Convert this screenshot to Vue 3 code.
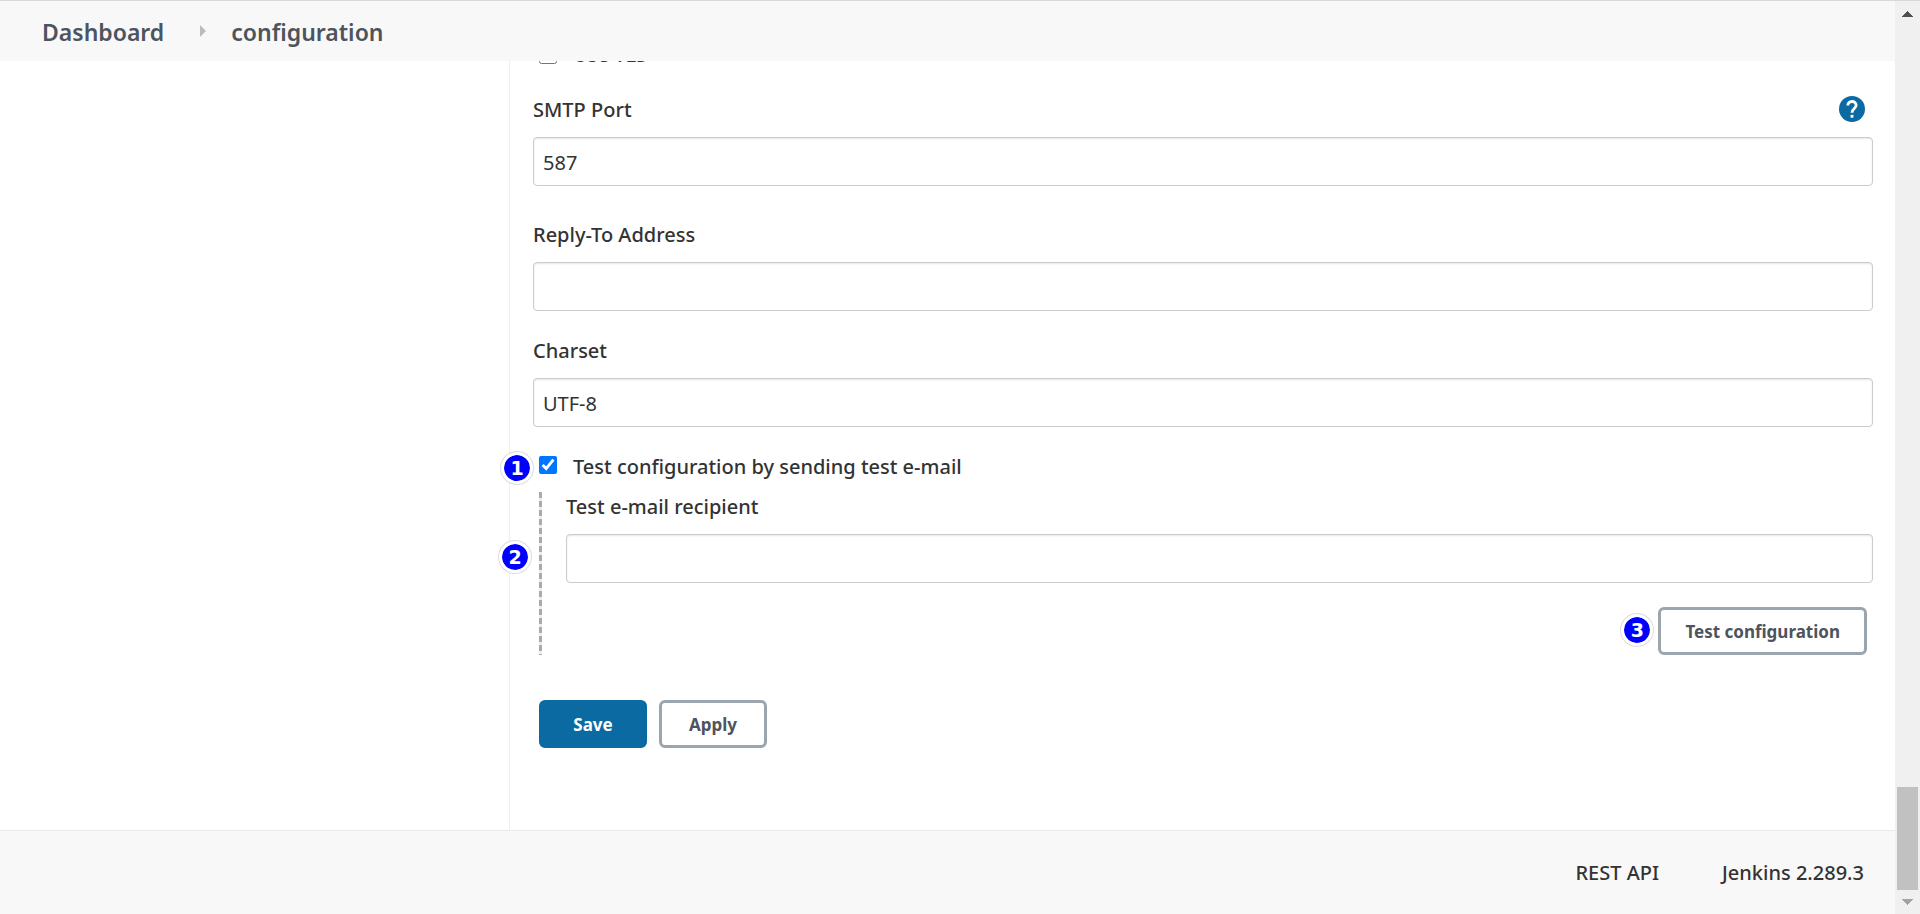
<script setup>
import { ref } from 'vue'

const useTls = ref(false)
const smtpPort = ref('587')
const replyTo = ref('')
const charset = ref('UTF-8')
const sendTest = ref(true)
const recipient = ref('')
</script>

<template>
  <div class="window">
    <div class="page">
      <header class="breadcrumbs">
        <a href="#dashboard">Dashboard</a>
        <svg class="crumb-arrow" viewBox="0 0 6 12" width="6" height="12" aria-hidden="true">
          <path d="M0 0L6 6L0 12Z" fill="#bbb" />
        </svg>
        <a href="#configuration">configuration</a>
      </header>

      <div class="body">
        <aside class="side"></aside>
        <main class="main">
          <form class="form" @submit.prevent>
            <div class="check-row tls">
              <input id="tls" v-model="useTls" type="checkbox" />
              <label for="tls">Use TLS</label>
            </div>

            <div class="field">
              <div class="label-row">
                <label for="port">SMTP Port</label>
                <a class="help" href="#help" aria-label="Help for SMTP Port">
                  <svg viewBox="2 2 20 20" width="26" height="26" aria-hidden="true">
                    <circle cx="12" cy="12" r="10" fill="#0b6aa2" />
                    <path
                      d="M8.800 9.400C8.800 7.400 10.200 6.200 12 6.200s3.200 1.200 3.200 3c0 2.300-3.200 2.600-3.200 5.600"
                      fill="none"
                      stroke="#fff"
                      stroke-width="2.200"
                    />
                    <path d="M10.900 16.500h2.200v2.200h-2.200z" fill="#fff" />
                  </svg>
                </a>
              </div>
              <input id="port" v-model="smtpPort" class="text" type="text" />
            </div>

            <div class="field reply">
              <div class="label-row"><label for="reply">Reply-To Address</label></div>
              <input id="reply" v-model="replyTo" class="text" type="text" />
            </div>

            <div class="field charset">
              <div class="label-row"><label for="charset">Charset</label></div>
              <input id="charset" v-model="charset" class="text" type="text" />
            </div>

            <div class="check-row test">
              <span class="badge badge-one">1</span>
              <input id="send" v-model="sendTest" type="checkbox" />
              <label for="send">Test configuration by sending test e-mail</label>
            </div>

            <div class="nested">
              <div class="dashes"></div>
              <div class="nested-body">
                <div class="label-row"><label for="recipient">Test e-mail recipient</label></div>
                <div class="anchor">
                  <span class="badge badge-two">2</span>
                  <input id="recipient" v-model="recipient" class="text" type="text" />
                </div>
                <div class="test-actions">
                  <div class="anchor">
                    <span class="badge badge-three">3</span>
                    <button type="button" class="btn">Test configuration</button>
                  </div>
                </div>
              </div>
            </div>

            <div class="actions">
              <button type="submit" class="btn primary">Save</button>
              <button type="button" class="btn">Apply</button>
            </div>
          </form>
        </main>
      </div>

      <footer class="footer">
        <a href="#api">REST API</a>
        <a href="#about">Jenkins 2.289.3</a>
      </footer>
    </div>

    <div class="scrollbar" aria-hidden="true">
      <svg viewBox="0 0 11 6" width="11" height="6" shape-rendering="crispEdges">
        <path d="M0 6L5.5 0L11 6Z" fill="#505050" />
      </svg>
      <div class="thumb"></div>
      <svg viewBox="0 0 11 6" width="11" height="6" shape-rendering="crispEdges">
        <path d="M0 0L5.5 6L11 0Z" fill="#a3a3a3" />
      </svg>
    </div>
  </div>
</template>

<style>
body {
  margin: 0;
  background: #fff;
}
</style>

<style scoped>
* {
  box-sizing: border-box;
}
.window {
  display: flex;
  height: 100vh;
  color: #333;
  font-family: "Noto Sans", "Open Sans", sans-serif;
  font-size: 20px;
  font-weight: 500;
  line-height: 30px;
}
a {
  color: inherit;
  text-decoration: none;
}
.page {
  flex: 1;
  min-width: 0;
  display: flex;
  flex-direction: column;
}
.breadcrumbs {
  flex: none;
  display: flex;
  align-items: center;
  height: 61px;
  padding: 2px 42px 0;
  border-top: 1px solid #d8d8d8;
  background: #f8f8f8;
  color: #4d545d;
  font-size: 23px;
  font-weight: 600;
}
.crumb-arrow {
  margin: 0 25px 2px 36px;
}
.body {
  flex: 1;
  min-height: 0;
  display: flex;
}
.side {
  flex: none;
  width: 510px;
  border-right: 1px solid #eaeff2;
}
.main {
  flex: 1;
  min-width: 0;
  display: flex;
  flex-direction: column;
  justify-content: flex-end;
  clip-path: inset(0 0 0 -40px);
}
.form {
  padding: 0 22px 82px 23px;
}
.check-row {
  position: relative;
  display: flex;
  align-items: center;
  gap: 16px;
  padding-left: 6px;
}
.check-row input {
  width: 18px;
  height: 18px;
  margin: 0 0 4px;
  accent-color: #0075ff;
}
.tls {
  margin-bottom: 25px;
}
.tls input {
  margin: 0;
}
.label-row {
  display: flex;
  justify-content: space-between;
  align-items: center;
  height: 30px;
  margin-bottom: 12px;
}
.help {
  display: flex;
  margin: 0 8px 2px 0;
}
.text {
  display: block;
  width: 100%;
  height: 49px;
  padding: 2px 9px 0;
  border: 1px solid #ccc;
  border-radius: 4px;
  background: #fff;
  box-shadow: inset 0 1px 2px rgba(0, 0, 0, 0.1);
  color: #333;
  font-family: inherit;
  font-size: 20px;
  font-weight: 400;
}
.reply {
  margin-top: 34px;
}
.charset {
  margin-top: 25px;
}
.test {
  margin-top: 25px;
}
.nested {
  display: flex;
  gap: 24px;
  margin: 10px 0 0 6px;
}
.dashes {
  flex: none;
  width: 3px;
  background: repeating-linear-gradient(#aaa 0 6px, #eee 6px 9px);
}
.nested-body {
  flex: 1;
  min-width: 0;
}
.anchor {
  position: relative;
}
.test-actions {
  display: flex;
  justify-content: flex-end;
  margin-top: 24px;
  padding-right: 6px;
}
.actions {
  display: flex;
  gap: 12px;
  margin-top: 45px;
  padding-left: 6px;
}
.btn {
  height: 48px;
  min-width: 108px;
  padding: 0 24px;
  border: 3px solid #9aa5ad;
  border-radius: 6px;
  background: #fff;
  color: #4d545d;
  font-family: inherit;
  font-size: 17px;
  font-weight: 700;
}
.primary {
  border-color: #0b6aa2;
  background: #0b6aa2;
  color: #fff;
}
.badge {
  position: absolute;
  width: 32px;
  height: 32px;
  border: 3px solid #fff;
  border-radius: 50%;
  background: #00f;
  background-clip: padding-box;
  box-shadow: 0 0 0 1px #ddd;
  color: #fff;
  font-family: "DejaVu Sans", sans-serif;
  font-size: 19px;
  font-weight: 700;
  line-height: 26px;
  text-align: center;
}
.badge-one {
  left: -32px;
  top: 0;
}
.badge-two {
  left: -67px;
  top: 7px;
}
.badge-three {
  left: -37px;
  top: 7px;
}
.footer {
  flex: none;
  display: flex;
  justify-content: flex-end;
  align-items: center;
  gap: 63px;
  height: 84px;
  padding: 1px 31px 0;
  border-top: 1px solid #e6ebee;
  background: #f8f8f8;
}
.scrollbar {
  flex: none;
  display: flex;
  flex-direction: column;
  align-items: center;
  width: 25px;
  padding: 10px 0 9px;
  border-top: 1px solid #d8d8d8;
  background: #f0f0f0;
}
.thumb {
  width: 21px;
  height: 103px;
  margin: auto 0 9px;
  background: #c1c1c1;
}
</style>
